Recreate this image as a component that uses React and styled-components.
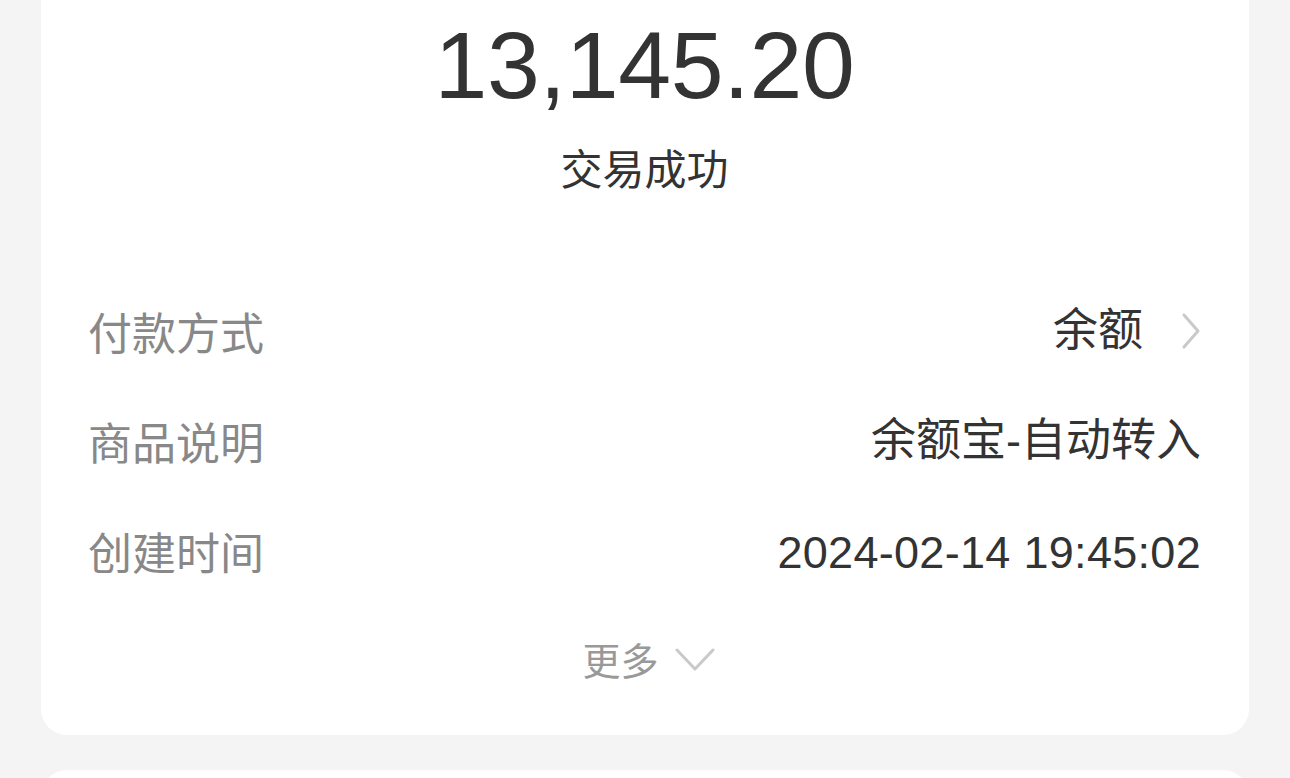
import React from "react";
import styled, { createGlobalStyle } from "styled-components";

const Global = createGlobalStyle`
  html, body { margin: 0; padding: 0; background: #f4f4f4; }
  body { font-family: "Liberation Sans", "Noto Sans CJK SC", sans-serif; overflow: hidden; }
  * { box-sizing: border-box; }
`;

const Page = styled.div`
  display: flex;
  flex-direction: column;
  gap: 35px;
  padding: 0 41px;
  height: 778px;
  overflow: hidden;
`;

const Card = styled.section`
  background: #ffffff;
  border-radius: ${(p) => (p.$top ? "0 0 26px 26px" : "26px 26px 0 0")};
  padding: ${(p) => (p.$top ? "17px 48px 47px 47px" : "0")};
  display: flex;
  flex-direction: column;
  flex-shrink: 0;
  height: ${(p) => (p.$top ? "auto" : "200px")};
`;

const Amount = styled.div`
  font-family: "Liberation Sans", sans-serif;
  font-size: 95px;
  line-height: 96px;
  height: 96px;
  color: #333333;
  text-align: center;
  letter-spacing: -0.3px;
`;

const Status = styled.div`
  margin-top: 33px;
  font-family: "Noto Sans CJK SC", sans-serif;
  font-size: 42px;
  line-height: 42px;
  color: #333333;
  text-align: center;
`;

const List = styled.div`
  margin-top: 88px;
  display: flex;
  flex-direction: column;
`;

const Row = styled.div`
  height: 110px;
  display: flex;
  align-items: center;
  justify-content: space-between;
`;

const Label = styled.span`
  font-family: "Noto Sans CJK SC", sans-serif;
  font-size: 44px;
  line-height: 110px;
  color: #888888;
`;

const Value = styled.span`
  display: flex;
  align-items: center;
  gap: 38px;
  font-family: "Liberation Sans", "Noto Sans CJK SC", sans-serif;
  font-size: 45px;
  line-height: 110px;
  letter-spacing: ${(p) => (p.$numeric ? "0.3px" : "0")};
  padding-top: ${(p) => (p.$numeric ? "4px" : "0")};
  color: #333333;
`;

const More = styled.div`
  margin-top: 22px;
  height: 60px;
  padding-left: 8px;
  display: flex;
  align-items: center;
  justify-content: center;
  gap: 16px;
  font-family: "Noto Sans CJK SC", sans-serif;
  font-size: 38px;
  color: #999999;
`;

const ChevronRight = () => (
  <svg width="20" height="38" viewBox="0 0 20 38" fill="none">
    <polyline points="3,3 17,19 3,35" stroke="#c9c9c9" strokeWidth="3" strokeLinecap="round" strokeLinejoin="round" />
  </svg>
);

const ChevronDown = () => (
  <svg width="40" height="26" viewBox="0 0 40 26" fill="none" style={{ marginTop: 4 }}>
    <polyline points="2,3 20,22 38,3" stroke="#c9c9c9" strokeWidth="3" strokeLinecap="round" strokeLinejoin="round" />
  </svg>
);

export default function App() {
  return (
    <>
      <Global />
      <Page>
        <Card $top>
          <Amount>13,145.20</Amount>
          <Status>交易成功</Status>
          <List>
            <Row>
              <Label>付款方式</Label>
              <Value>
                余额
                <ChevronRight />
              </Value>
            </Row>
            <Row>
              <Label>商品说明</Label>
              <Value>余额宝-自动转入</Value>
            </Row>
            <Row>
              <Label>创建时间</Label>
              <Value $numeric>2024-02-14 19:45:02</Value>
            </Row>
          </List>
          <More>
            更多
            <ChevronDown />
          </More>
        </Card>
        <Card />
      </Page>
    </>
  );
}
